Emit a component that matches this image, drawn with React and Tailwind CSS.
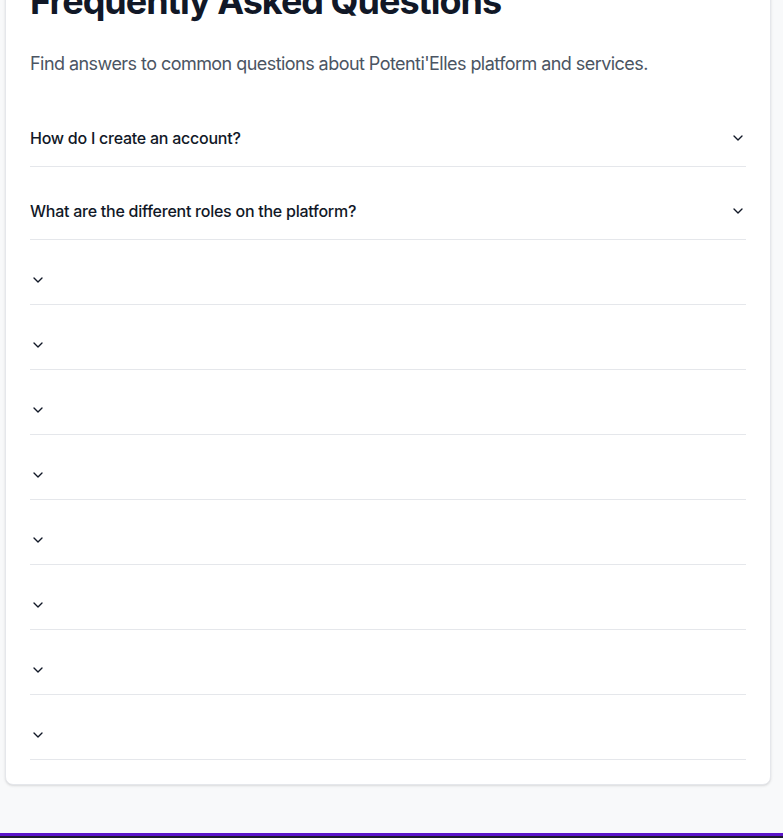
import React from "react";
import { ChevronDown } from "lucide-react";

const items = [
  "How do I create an account?",
  "What are the different roles on the platform?",
  null,
  null,
  null,
  null,
  null,
  null,
  null,
  null,
];

export default function App() {
  return (
    <div className="min-h-screen bg-[#f8f9fa] font-['Inter','Noto_Sans',sans-serif] overflow-hidden">
      <div className="mt-[-44px] ml-[5px] mr-[12px] mb-12 rounded-lg border border-[#e5e7eb] bg-white p-6 shadow-sm">
        <h1 className="mb-[29px] text-4xl font-bold leading-10 tracking-[-1px] text-[#111827]">
          Frequently Asked Questions
        </h1>
        <p className="mb-8 text-lg leading-7 tracking-[-0.55px] text-[#4b5563]">
          Find answers to common questions about Potenti'Elles platform and services.
        </p>
        <div className="space-y-4">
          {items.map((q, i) => (
            <div key={i} className="border-b border-[#e5e7eb]">
              <button className="flex w-full items-center justify-between py-4 text-left text-base font-medium tracking-[-0.25px] text-[#111827]">
                {q && <span>{q}</span>}
                <ChevronDown className="h-4 w-4 shrink-0 text-[#111827]" strokeWidth={2} />
              </button>
            </div>
          ))}
        </div>
      </div>
      <footer className="h-20 border-t-[3px] border-[#5a14c8] bg-[#1c1a2b]" />
    </div>
  );
}
